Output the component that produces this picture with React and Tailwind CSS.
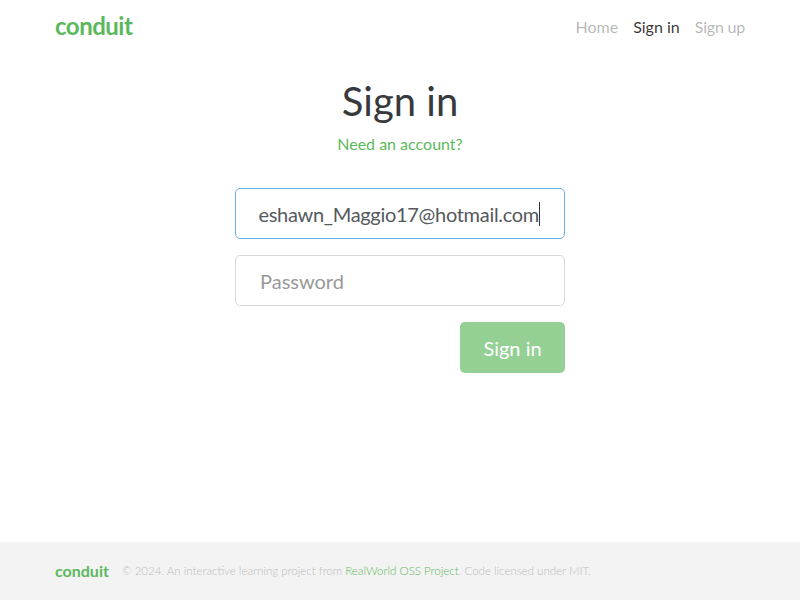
import React from "react";

const body = { fontFamily: "Lato, 'Noto Sans', sans-serif" };

const Navbar = () => (
  <nav className="h-14 bg-white">
    <div className="mx-auto w-[690px] h-full flex items-center justify-between">
      <a className="text-[#5cb85c] font-bold text-[24px] tracking-[-0.5px] leading-none -mt-1">
        conduit
      </a>
      <ul className="flex items-center gap-[15px] text-[16px] -mt-[2px]">
        <li className="text-black/30">Home</li>
        <li className="text-black/80">Sign in</li>
        <li className="text-black/30 tracking-[-0.2px]">Sign up</li>
      </ul>
    </div>
  </nav>
);

const Footer = () => (
  <footer className="h-[58px] bg-[#f3f3f3] flex items-center">
    <div className="mx-auto w-[690px] flex items-center gap-[13px]">
      <span className="text-[#5cb85c] font-bold text-[16px] leading-none">conduit</span>
      <span className="text-[11.5px] text-[#bbb] font-light">
        © 2024. An interactive learning project from{" "}
        <a className="text-[#5cb85c]">RealWorld OSS Project</a>. Code licensed under MIT.
      </span>
    </div>
  </footer>
);

export default function App() {
  return (
    <div className="min-h-[600px] flex flex-col bg-white" style={body}>
      <Navbar />

      <main className="flex-1">
        <div className="mx-auto w-[330px] pt-[19px]">
          <h1 className="text-center text-[40px] leading-[52px] text-[#373a3c]">Sign in</h1>
          <p className="text-center text-[16px] text-[#5cb85c] mt-[5px]">Need an account?</p>

          <form className="mt-[32px] flex flex-col">
            {/* email field, focused and scrolled to the end */}
            <div className="h-[51px] border border-[#66afe9] rounded-[5px] px-6 flex items-center justify-end">
              <span className="whitespace-nowrap text-[20px] text-[#55595c] tracking-[-0.3px]">
                eshawn_Maggio17@hotmail.com
              </span>
              <span className="shrink-0 w-px h-[24px] bg-[#333]"></span>
            </div>

            <div className="mt-4 h-[51px] border border-black/15 rounded-[5px] px-6 flex items-center">
              <span className="text-[20px] text-[#999]">Password</span>
            </div>

            <div className="mt-4 flex justify-end">
              <button
                type="button"
                className="h-[51px] w-[105px] rounded-[5px] bg-[#5cb85c] opacity-65 text-white text-[20px]"
              >
                Sign in
              </button>
            </div>
          </form>
        </div>
      </main>

      <Footer />
    </div>
  );
}
